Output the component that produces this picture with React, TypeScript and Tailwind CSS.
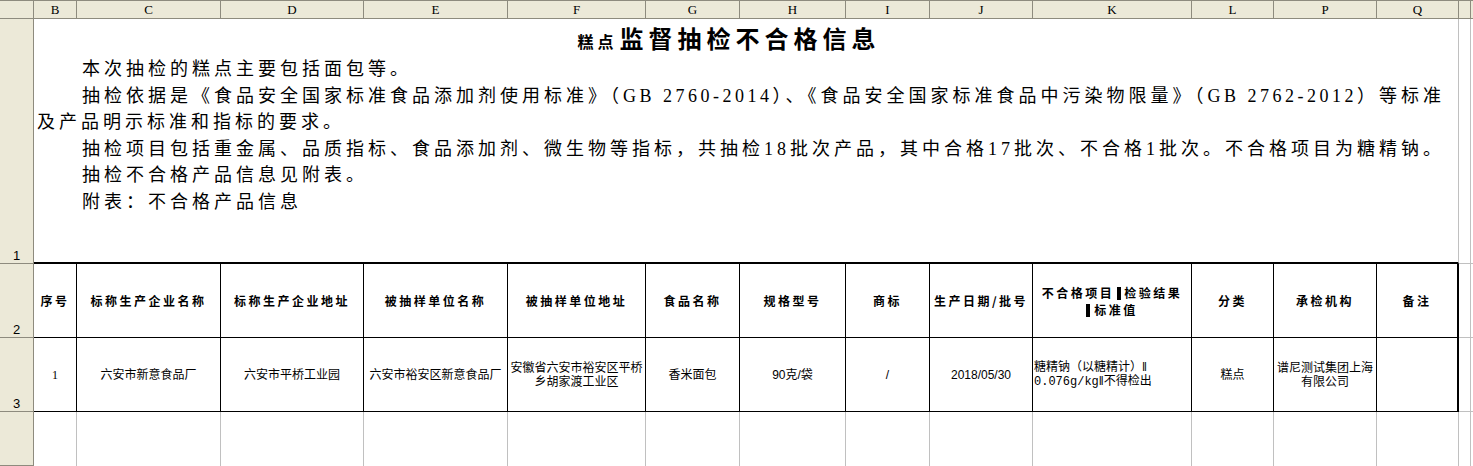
import React from "react";

const letters = ["B", "C", "D", "E", "F", "G", "H", "I", "J", "K", "L", "P", "Q"];

const headLabels: React.ReactNode[] = [
  "序号",
  "标称生产企业名称",
  "标称生产企业地址",
  "被抽样单位名称",
  "被抽样单位地址",
  "食品名称",
  "规格型号",
  "商标",
  "生产日期/批号",
  <span key="k" className="block leading-[17px]">
    不合格项目<span className="inline-block w-[4px] h-[13px] bg-black align-[-2px] mx-[3px]"></span>检验结果
    <br />
    <span className="inline-block w-[4px] h-[13px] bg-black align-[-2px] mr-[4px]"></span>标准值
  </span>,
  "分类",
  "承检机构",
  "备注",
];

const dataCells: React.ReactNode[] = [
  <span key="a" className="font-['Liberation_Serif',serif]">1</span>,
  "六安市新意食品厂",
  "六安市平桥工业园",
  "六安市裕安区新意食品厂",
  <span key="f" className="block leading-[14px]">安徽省六安市裕安区平桥<br />乡胡家渡工业区</span>,
  "香米面包",
  "90克/袋",
  "/",
  "2018/05/30",
  <span key="k" className="block text-left leading-[14px] pl-[1px]">
    糖精钠（以糖精计）‖<br />
    <span className="font-['Liberation_Mono',monospace] text-[12px]">0.076g/kg</span>‖不得检出
  </span>,
  "糕点",
  <span key="p" className="block leading-[14px]">谱尼测试集团上海<br />有限公司</span>,
  "",
];

const HeadCell = ({ children }: { children?: React.ReactNode }) => (
  <div className="bg-[#ECE9D8] border-t border-b border-r border-[#8E8B7E] flex items-center justify-center text-[13px] leading-none text-black font-['Liberation_Serif',serif]">
    {children}
  </div>
);

const RowHead = ({ n }: { n?: string }) => (
  <div className="bg-[#ECE9D8] border-r border-b border-[#8E8B7E] flex items-end justify-center pb-[1px] text-[13px] leading-none text-black font-['Liberation_Sans',sans-serif]">
    {n}
  </div>
);

export default function App() {
  return (
    <div className="w-[1473px] h-[466px] overflow-hidden bg-white">
      <div className="grid grid-cols-[34px_43px_144px_143px_144px_138px_94px_106px_84px_103px_159px_82px_103px_82px_12px_1fr] grid-rows-[19px_245px_74px_74px_1fr] h-[466px]">
        {/* column header row */}
        <HeadCell />
        {letters.map((l) => (
          <HeadCell key={l}>{l}</HeadCell>
        ))}
        <HeadCell />
        <div className="bg-[#ECE9D8] border-t border-b border-[#8E8B7E]"></div>

        {/* row 1 */}
        <RowHead n="1" />
        <div className="col-span-13 border-r border-[#C0C0C0] border-b-2 border-b-black font-['Liberation_Serif','Noto_Sans_CJK_SC',serif] text-black">
          <div className="mt-[2px] h-[34px] flex items-baseline justify-center pr-[34px] font-['Noto_Sans_CJK_SC',sans-serif] font-bold leading-[34px]">
            <span className="text-[16px] tracking-[4px]">糕点</span>
            <span className="text-[24px] tracking-[5px] ml-[2px]">监督抽检不合格信息</span>
          </div>
          <div className="mt-[1px] text-[18px] leading-[26.5px] tracking-[4px] whitespace-nowrap">
            <div className="pl-[48px]">本次抽检的糕点主要包括面包等。</div>
            <div className="pl-[48px]">
              抽检依据是《食品安全国家标准食品添加剂使用标准》（<span className="tracking-[3.5px]">GB 2760-2014</span>）、《食品安全国家标准食品中污染物限量》（<span className="tracking-[3.5px]">GB 2762-2012</span>）等标准
            </div>
            <div className="pl-[3px]">及产品明示标准和指标的要求。</div>
            <div className="pl-[48px]">抽检项目包括重金属、品质指标、食品添加剂、微生物等指标，共抽检18批次产品，其中合格17批次、不合格1批次。不合格项目为糖精钠。</div>
            <div className="pl-[48px]">抽检不合格产品信息见附表。</div>
            <div className="pl-[48px]">附表：不合格产品信息</div>
          </div>
        </div>
        <div className="border-r border-b border-[#C0C0C0]"></div>
        <div className="border-b border-[#C0C0C0]"></div>

        {/* row 2: table header */}
        <RowHead n="2" />
        {headLabels.map((h, i) => (
          <div
            key={i}
            className={
              i === 12
                ? "border-r-2 border-b border-black flex items-center justify-center text-center text-[12px] font-bold tracking-[2.5px] text-black font-['Noto_Sans_CJK_SC',sans-serif]"
                : "border-r border-b border-black flex items-center justify-center text-center text-[12px] font-bold tracking-[2.5px] text-black font-['Noto_Sans_CJK_SC',sans-serif]"
            }
          >
            {h}
          </div>
        ))}
        <div className="border-r border-b border-[#C0C0C0]"></div>
        <div className="border-b border-[#C0C0C0]"></div>

        {/* row 3: data */}
        <RowHead n="3" />
        {dataCells.map((d, i) => (
          <div
            key={i}
            className={
              i === 12
                ? "border-r-2 border-b border-black flex items-center justify-center text-center text-[12px] text-black whitespace-nowrap font-['Liberation_Sans','Noto_Sans_CJK_SC',sans-serif]"
                : i === 9
                ? "border-r border-b border-black flex items-center justify-start text-left text-[12px] text-black whitespace-nowrap font-['Liberation_Sans','Noto_Sans_CJK_SC',sans-serif]"
                : "border-r border-b border-black flex items-center justify-center text-center text-[12px] text-black whitespace-nowrap font-['Liberation_Sans','Noto_Sans_CJK_SC',sans-serif]"
            }
          >
            {d}
          </div>
        ))}
        <div className="border-r border-b border-[#C0C0C0]"></div>
        <div className="border-b border-[#C0C0C0]"></div>

        {/* row 4: empty */}
        <RowHead />
        {letters.map((l) => (
          <div key={l} className="border-r border-[#C0C0C0]"></div>
        ))}
        <div className="border-r border-[#C0C0C0]"></div>
        <div></div>
      </div>
    </div>
  );
}
